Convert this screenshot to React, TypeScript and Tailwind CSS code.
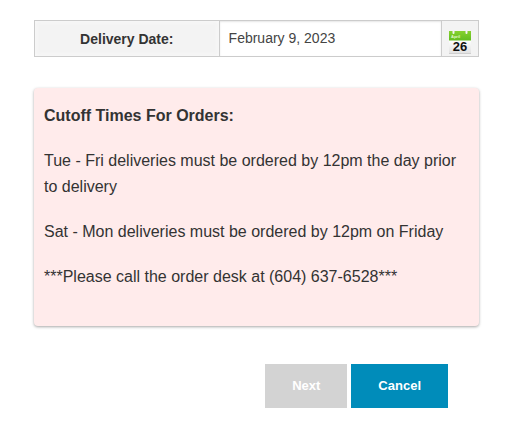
import { useState } from 'react';

const cutoffNotes = [
  'Tue - Fri deliveries must be ordered by 12pm the day prior to delivery',
  'Sat - Mon deliveries must be ordered by 12pm on Friday',
  '***Please call the order desk at (604) 637-6528***',
];

const CalendarIcon = () => (
  <svg viewBox="0 0 24 26" className="h-[26px] w-6" aria-hidden="true">
    <defs>
      <linearGradient id="calendar-top" x1="0" y1="0" x2="0" y2="1">
        <stop offset="0" stopColor="#86d12f" />
        <stop offset="1" stopColor="#62bd20" />
      </linearGradient>
      <linearGradient id="calendar-page" x1="0" y1="0" x2="0" y2="1">
        <stop offset="0" stopColor="#ffffff" />
        <stop offset="1" stopColor="#e2e2e2" />
      </linearGradient>
    </defs>
    <rect x="1" y="10" width="22" height="13" fill="url(#calendar-page)" />
    <path d="M1 23.500h22" stroke="#cfcfcf" />
    <path
      d="M1 1h3.500v2a1 1 0 0 0 2 0V1h11v2a1 1 0 0 0 2 0V1H23v9.500H1z"
      fill="url(#calendar-top)"
    />
    <text x="3" y="8" fontSize="4" fontWeight="bold" fill="#e4f7cf" fontFamily="Liberation Sans, sans-serif">
      April
    </text>
    <text x="12" y="21" fontSize="13" fontWeight="bold" textAnchor="middle" fill="#111" fontFamily="Liberation Sans, sans-serif">
      26
    </text>
  </svg>
);

export default function App() {
  const [date, setDate] = useState('February 9, 2023');

  return (
    <form
      className="bg-white pt-5 pr-11 pl-[34px] font-['Liberation_Sans',Arial,sans-serif] text-[#333]"
      onSubmit={(e) => e.preventDefault()}
    >
      <div className="flex h-[37px] border border-[#ccc] text-sm">
        <label
          htmlFor="delivery-date"
          className="flex w-5/12 items-center justify-center border-r border-[#ccc] bg-[#f3f3f3] font-bold shadow-[inset_0_0_5px_#fafafa]"
        >
          Delivery Date:
        </label>
        <input
          id="delivery-date"
          type="text"
          value={date}
          onChange={(e) => setDate(e.target.value)}
          className="min-w-0 flex-1 px-[9px] pb-0.5 text-[#444] shadow-[inset_0_1px_2px_rgba(0,0,0,0.1)] outline-none"
        />
        <button
          type="button"
          aria-label="Choose delivery date"
          className="flex w-[37px] items-end justify-center border-l border-[#ccc] bg-[#f3f3f3]"
        >
          <CalendarIcon />
        </button>
      </div>

      <section className="mt-[31px] flex flex-col gap-[19px] rounded bg-[#ffebeb] px-2.5 pt-[15px] pb-9 text-base leading-[26px] shadow-[0_1px_3px_rgba(0,0,0,0.35)]">
        <h2 className="font-bold">Cutoff Times For Orders:</h2>
        {cutoffNotes.map((note) => (
          <p key={note}>{note}</p>
        ))}
      </section>

      <div className="mt-[38px] mr-[31px] flex justify-end gap-1 text-[13px] font-bold text-white">
        <button type="submit" disabled className="h-11 bg-[#d3d3d3] px-[27px]">
          Next
        </button>
        <button type="button" className="h-11 bg-[#008cba] px-[27px]">
          Cancel
        </button>
      </div>
    </form>
  );
}
